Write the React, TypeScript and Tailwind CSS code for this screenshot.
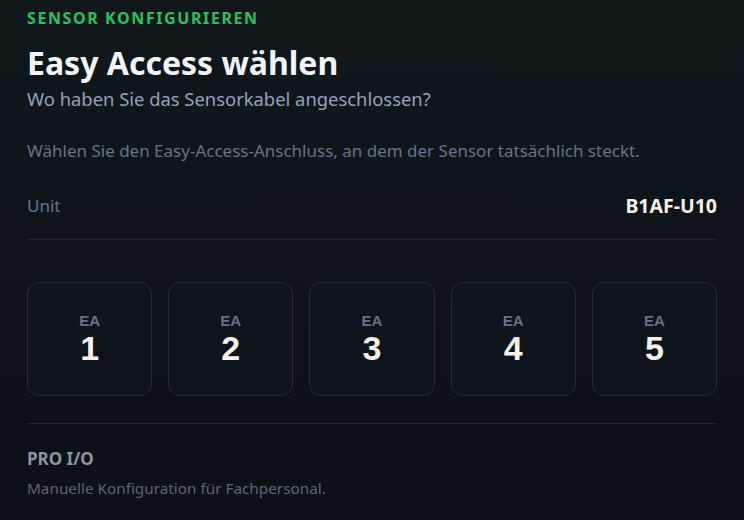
export default function App() {
  const ports = [1, 2, 3, 4, 5];
  return (
    <div
      className="min-h-[520px] w-full bg-gradient-to-b from-[#10181c] to-[#0b0f16] px-[27px] pt-[7px] pb-6"
      style={{ fontFamily: '"Noto Sans", "Open Sans", sans-serif' }}
    >
      {/* Header */}
      <p className="text-[16px] font-bold uppercase tracking-[0.1em] text-[#22c55e] leading-[22px]">
        Sensor konfigurieren
      </p>
      <h1 className="mt-[14px] text-[32px] font-bold leading-[40px] text-[#f1f5f9]">Easy Access wählen</h1>
      <p className="mt-[4px] text-[18.4px] leading-[24px] text-[#94a3b8]">Wo haben Sie das Sensorkabel angeschlossen?</p>

      <p className="mt-[29px] text-[17px] leading-[22px] text-[#64748b]">
        Wählen Sie den Easy-Access-Anschluss, an dem der Sensor tatsächlich steckt.
      </p>

      {/* Unit */}
      <div className="mt-[33px] flex items-center justify-between border-b border-[#1d252d] pb-[22px]">
        <span className="text-[17px] leading-[22px] text-[#64748b]">Unit</span>
        <span className="text-[19.5px] font-bold leading-[22px] text-[#f5f1ea]">B1AF-U10</span>
      </div>

      {/* Ports */}
      <div className="mt-[42px] grid grid-cols-5 gap-4">
        {ports.map((n) => (
          <button
            key={n}
            className="flex h-[114px] flex-col items-center justify-center rounded-xl border border-[#232b35] bg-[#0e141b]"
            style={{ fontFamily: '"Liberation Sans", Arial, sans-serif' }}
          >
            <span className="text-[15px] font-bold leading-[18px] text-[#687386]">EA</span>
            <span className="text-[34px] font-bold leading-[36px] text-[#f5f1ea]">{n}</span>
          </button>
        ))}
      </div>

      {/* Pro I/O */}
      <div className="mt-[27px] border-t border-[#1d252d] pt-[24px]">
        <p className="text-[17px] font-bold leading-[22px] text-[#8b95a3]">PRO I/O</p>
        <p className="mt-[8px] text-[15.3px] leading-[20px] text-[#5b6675]">Manuelle Konfiguration für Fachpersonal.</p>
      </div>
    </div>
  );
}
